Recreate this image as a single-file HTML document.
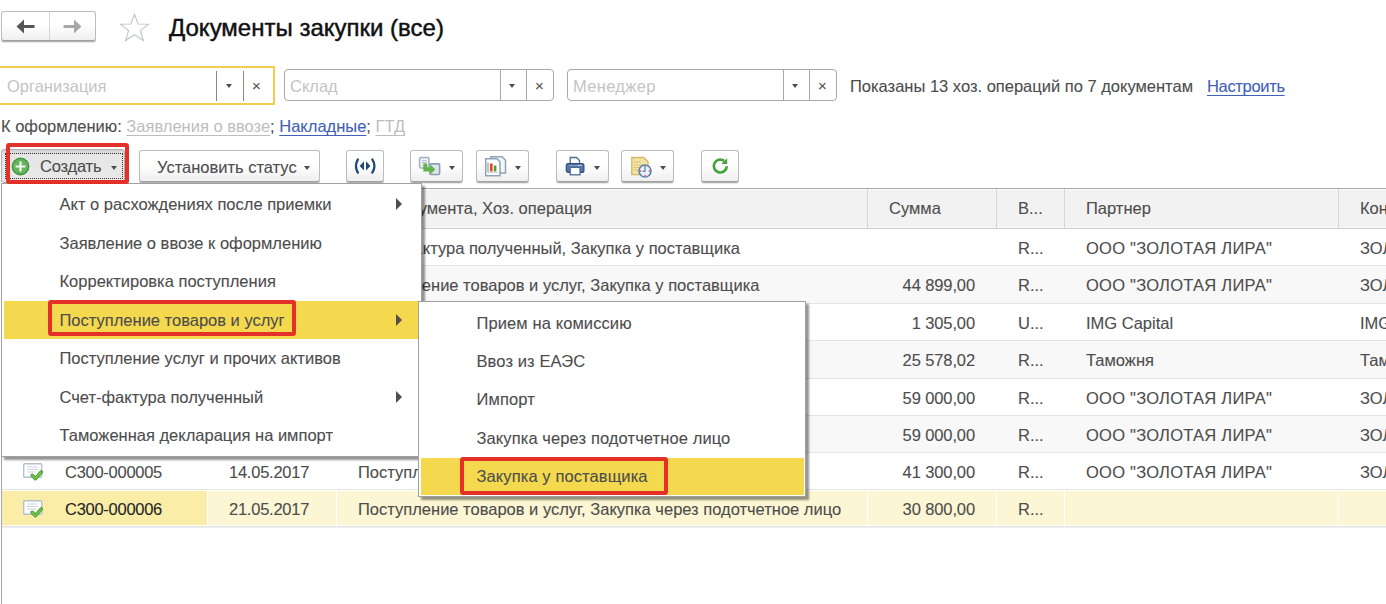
<!DOCTYPE html>
<html><head><meta charset="utf-8">
<style>
*{box-sizing:border-box;margin:0;padding:0}
html,body{width:1386px;height:604px;overflow:hidden;background:#fff}
body{position:relative;font-family:"Liberation Sans",sans-serif;font-size:16.5px;color:#4d4d4d;-webkit-text-stroke:0.1px currentColor}
.a{position:absolute}
.t{position:absolute;white-space:nowrap;line-height:20px;height:20px}
.btn{position:absolute;border:1px solid #bcbcbc;border-bottom-color:#a2a2a2;border-radius:3px;background:linear-gradient(#fff 0%,#fff 45%,#efefef 100%);box-shadow:0 1px 0 #b0b0b0,0 2px 1px rgba(0,0,0,.10)}
.dd{position:absolute;width:0;height:0;border-left:3.5px solid transparent;border-right:3.5px solid transparent;border-top:4px solid #4d4d4d}
.fld{position:absolute;border:1px solid #a8a8a8;border-radius:4px;background:#fff;height:32px;top:69px}
.sep{position:absolute;top:0;bottom:0;width:1px;background:#a8a8a8}
.ph{color:#c4c4c4;-webkit-text-stroke:0}
.x{position:absolute;font-size:15px;color:#505050;-webkit-text-stroke:0.1px #505050}
.hl{position:absolute;width:1px;background:#d6d6d6}
.rowl{position:absolute;left:2px;right:0;height:1px;background:#e4e4e4}
.menu{position:absolute;background:#fff;border:1px solid #a0a0a0;box-shadow:3px 3px 2px rgba(0,0,0,.42)}
.arr{position:absolute;width:0;height:0;border-top:6px solid transparent;border-bottom:6px solid transparent;border-left:6.5px solid #4d4d4d}
.u{text-decoration:underline;text-underline-offset:3px;text-decoration-thickness:1px}
.red{position:absolute;border:4px solid #e3312a;border-radius:3px}
</style></head><body>

<!-- nav buttons -->
<div class="btn" style="left:1px;top:11px;width:95px;height:30px"></div>
<div class="a" style="left:49px;top:12px;width:1px;height:28px;background:#d4d4d4"></div>
<svg class="a" style="left:16px;top:19px" width="20" height="15" viewBox="0 0 20 15"><path d="M0.5 7.5 L8 0.5 L8 6 L18.5 6 L18.5 9 L8 9 L8 14.5 Z" fill="#555"/></svg>
<svg class="a" style="left:62px;top:19px" width="20" height="15" viewBox="0 0 20 15"><path d="M19.5 7.5 L12 0.5 L12 6 L1.5 6 L1.5 9 L12 9 L12 14.5 Z" fill="#a8a8a8"/></svg>

<!-- star -->
<svg class="a" style="left:119px;top:13px" width="31" height="29" viewBox="0 0 31 29"><path d="M15.5 1.5 L19.2 11 L29.5 11.2 L21.4 17.6 L24.4 27.5 L15.5 21.8 L6.6 27.5 L9.6 17.6 L1.5 11.2 L11.8 11 Z" fill="none" stroke="#c3c7cc" stroke-width="1.2"/></svg>

<div class="t" style="left:169px;top:14px;font-size:24px;line-height:28px;height:28px;color:#111;-webkit-text-stroke:0.45px #111">Документы закупки (все)</div>

<!-- filters -->
<div class="a" style="left:-10px;top:66px;width:285px;height:39px;border:2px solid #f2cc4c"></div>
<div class="a" style="left:-10px;top:70px;width:281px;height:31px;background:#fff"></div>
<div class="a" style="left:216px;top:71px;width:1px;height:30px;background:#888"></div>
<div class="a" style="left:243px;top:71px;width:1px;height:30px;background:#888"></div>
<div class="t ph" style="left:7px;top:76px">Организация</div>
<div class="dd" style="left:226px;top:84px"></div>
<div class="t x" style="left:252px;top:76px">×</div>

<div class="fld" style="left:284px;width:270px">
  <div class="sep" style="left:215px"></div><div class="sep" style="left:241px"></div>
</div>
<div class="t ph" style="left:290px;top:76px">Склад</div>
<div class="dd" style="left:509px;top:84px"></div>
<div class="t x" style="left:535px;top:76px">×</div>

<div class="fld" style="left:567px;width:270px">
  <div class="sep" style="left:215px"></div><div class="sep" style="left:241px"></div>
</div>
<div class="t ph" style="left:573px;top:76px;letter-spacing:0.33px">Менеджер</div>
<div class="dd" style="left:792px;top:84px"></div>
<div class="t x" style="left:818px;top:76px">×</div>

<div class="t" style="left:850px;top:76px">Показаны 13 хоз. операций по 7 документам</div>
<div class="t u" style="left:1207px;top:76px;color:#4161b8;letter-spacing:-0.33px">Настроить</div>

<div class="t" style="left:1px;top:116px">К оформлению: <span class="u" style="color:#bdbdbd;-webkit-text-stroke:0">Заявления о ввозе</span>; <span class="u" style="color:#4161b8">Накладные</span>; <span class="u" style="color:#bdbdbd;-webkit-text-stroke:0">ГТД</span></div>

<!-- toolbar -->
<div class="a" style="left:1px;top:149px;width:124px;height:34px;border:1px solid #b0b0b0;border-radius:3px;background:linear-gradient(#d0d0d0,#e6e6e6 15%,#e9e9e9)"></div>
<div class="a" style="left:5px;top:153px;width:118px;height:26px;border:1px dotted #333"></div>
<svg class="a" style="left:10.5px;top:156.5px" width="19" height="19" viewBox="0 0 19 19"><circle cx="9.5" cy="9.5" r="8.9" fill="#3f9440"/><circle cx="9.5" cy="9.5" r="7.6" fill="#66b35e"/><path d="M9.5 4.6v9.8M4.6 9.5h9.8" stroke="#f4fbf2" stroke-width="2.2"/></svg>
<div class="t" style="left:40px;top:156px;letter-spacing:-0.2px">Создать</div>
<div class="dd" style="left:111px;top:166px"></div>

<div class="btn" style="left:139px;top:150px;width:181px;height:32px"></div>
<div class="t" style="left:157px;top:157px">Установить статус</div>
<div class="dd" style="left:304px;top:166px"></div>

<div class="btn" style="left:346px;top:150px;width:38px;height:32px"></div>
<svg class="a" style="left:354px;top:158px" width="22" height="16" viewBox="0 0 22 16"><path d="M3.85 1.4 Q0.05 8 3.85 14.6" fill="none" stroke="#1f4a78" stroke-width="2.3" stroke-linecap="round"/><path d="M18.3 1.4 Q22.6 8 18.3 14.6" fill="none" stroke="#1f4a78" stroke-width="2.3" stroke-linecap="round"/><path d="M10 3.2 L5.6 7.9 L10 12.6 Z M12 3.2 L16.4 7.9 L12 12.6 Z" fill="#1f4a78"/></svg>
<div class="btn" style="left:410px;top:150px;width:53px;height:32px"></div>
<svg class="a" style="left:418px;top:156px" width="23" height="20" viewBox="0 0 23 20"><rect x="1.6" y="1.6" width="9.4" height="10.4" rx="1.2" fill="#eef2f6" stroke="#a3b1c2" stroke-width="1.5"/><path d="M4 4.5h5M4 6.5h5" stroke="#b8c4d0" stroke-width="1"/><rect x="11.8" y="7.9" width="9.8" height="10.6" rx="1.2" fill="#dde6ef" stroke="#8d9db2" stroke-width="1.6"/><path d="M5.3 7.5 H9.3 V11.6 H12.3 V8.6 L17.4 13.4 L12.3 18.2 V15.4 H5.3 Z" fill="#5fb548"/></svg>
<div class="dd" style="left:449px;top:166px"></div>
<div class="btn" style="left:476px;top:150px;width:53px;height:32px"></div>
<svg class="a" style="left:484px;top:155px" width="23" height="23" viewBox="0 0 23 23"><path d="M6.8 1.8 H18 L21.5 5.3 V18 H6.8 Z" fill="#f4f7fa" stroke="#8fa2b8" stroke-width="1.5"/><path d="M12 6 h2.5 v8 h-2.5z" fill="#6db04f"/><path d="M1.7 3.8 H13 L16 6.8 V20.8 H1.7 Z" fill="#fff" stroke="#8fa2b8" stroke-width="1.5"/><path d="M4 7.5v9.5" stroke="#aaa" stroke-width="1.4"/><path d="M6 8.5h2.6v8H6z" fill="#e0442c"/><path d="M9.8 10.5h2.6v6H9.8z" fill="#4e9e34"/><path d="M3.5 17.5h11" stroke="#cdd6e0" stroke-width="1.2"/></svg>
<div class="dd" style="left:515px;top:166px"></div>
<div class="btn" style="left:556px;top:150px;width:53px;height:32px"></div>
<svg class="a" style="left:565px;top:156px" width="20" height="20" viewBox="0 0 20 20"><path d="M5.2 1.5 H11.5 L14.5 4.5 V8 H5.2 Z" fill="#fff" stroke="#4b6a92" stroke-width="1.3"/><rect x="1.3" y="7.6" width="17.6" height="8.8" rx="2" fill="#5277a6" stroke="#2f4f7a" stroke-width="1.2"/><path d="M4 9.6h12" stroke="#8aa6c8" stroke-width="1"/><rect x="5.2" y="11.4" width="9.8" height="7.4" fill="#fff" stroke="#4b6a92" stroke-width="1.3"/><path d="M13.3 9.3h1.2M15.6 9.3h1.2" stroke="#fff" stroke-width="1"/></svg>
<div class="dd" style="left:594px;top:166px"></div>
<div class="btn" style="left:621px;top:150px;width:53px;height:32px"></div>
<svg class="a" style="left:630px;top:156px" width="22" height="22" viewBox="0 0 22 22"><path d="M1.8 1.5 H13.8 L18 5.7 V18.6 H1.8 Z" fill="#f3e3a3" stroke="#d6b866" stroke-width="1.4"/><path d="M4 6h7M4 9h9M4 11.5h6M4 14h5" stroke="#d8c27e" stroke-width="1"/><circle cx="15" cy="15" r="6" fill="#e9f1fa" stroke="#5a80ad" stroke-width="1.6"/><path d="M15 11v4.2h-2.6" fill="none" stroke="#4a6fa0" stroke-width="1.1"/><path d="M15 10v1.3M15 18.7V20M9.9 15h1.3M18.7 15h1.3" stroke="#d0503a" stroke-width="1.3"/></svg>
<div class="dd" style="left:660px;top:166px"></div>
<div class="btn" style="left:701px;top:150px;width:38px;height:32px"></div>
<svg class="a" style="left:706px;top:152px" width="30" height="28" viewBox="706 152 30 28"><path d="M726.75 166.2 A6.45 6.45 0 1 1 724.2 160.9" fill="none" stroke="#47a33b" stroke-width="2.7"/><path d="M727.2 158.2 L727.2 163.9 L721.2 163.9 Z" fill="#47a33b"/></svg>

<!-- TABLE -->
<div class="a" style="left:1px;top:188px;width:1px;height:416px;background:#a8a8a8"></div>
<div class="a" style="left:1px;top:188px;width:1385px;height:1px;background:#a8a8a8"></div>
<div class="a" style="left:2px;top:189px;width:1384px;height:39px;background:#f2f2f2"></div>
<div class="a" style="left:2px;top:189px;width:1384px;height:1px;background:#fbfbfb"></div>
<div class="a" style="left:2px;top:227px;width:1384px;height:1px;background:#f7f7f7"></div>
<div class="a" style="left:2px;top:228px;width:1384px;height:1px;background:#cdcdcd"></div>
<div class="hl" style="left:207px;top:189px;height:39px"></div>
<div class="hl" style="left:336px;top:189px;height:39px"></div>
<div class="hl" style="left:867px;top:189px;height:39px"></div>
<div class="hl" style="left:996px;top:189px;height:39px"></div>
<div class="hl" style="left:1064px;top:189px;height:39px"></div>
<div class="hl" style="left:1338px;top:189px;height:39px"></div>
<div class="t" style="left:65px;top:197.9px">Номер</div>
<div class="t" style="left:229px;top:197.9px">Дата</div>
<div class="t" style="left:358px;top:197.9px">Вид документа, Хоз. операция</div>
<div class="t" style="left:889px;top:197.9px">Сумма</div>
<div class="t" style="left:1018px;top:197.9px">В...</div>
<div class="t" style="left:1086px;top:197.9px">Партнер</div>
<div class="t" style="left:1360px;top:197.9px">Контрагент</div>
<div class="rowl" style="top:265px"></div>
<div class="t" style="left:358px;top:237.6px;width:505px;overflow:hidden">Счет-фактура полученный, Закупка у поставщика</div>
<div class="t" style="left:1018px;top:237.6px">R...</div>
<div class="t" style="left:1086px;top:237.6px;letter-spacing:0.25px">ООО "ЗОЛОТАЯ ЛИРА"</div>
<div class="t" style="left:1360px;top:237.6px">ЗОЛОТАЯ</div>
<div class="a" style="left:2px;top:266px;width:1384px;height:37px;background:#f8f8f8"></div>
<div class="rowl" style="top:303px"></div>
<div class="t" style="left:358px;top:274.6px;width:505px;overflow:hidden">Поступление товаров и услуг, Закупка у поставщика</div>
<div class="t" style="left:860px;width:115px;text-align:right;letter-spacing:-0.11px;top:274.6px">44 899,00</div>
<div class="t" style="left:1018px;top:274.6px">R...</div>
<div class="t" style="left:1086px;top:274.6px;letter-spacing:0.25px">ООО "ЗОЛОТАЯ ЛИРА"</div>
<div class="t" style="left:1360px;top:274.6px">ЗОЛОТАЯ</div>
<div class="rowl" style="top:340px"></div>
<div class="t" style="left:358px;top:312.6px;width:505px;overflow:hidden">Поступление товаров и услуг, Прием на комиссию</div>
<div class="t" style="left:860px;width:115px;text-align:right;letter-spacing:-0.11px;top:312.6px">1 305,00</div>
<div class="t" style="left:1018px;top:312.6px">U...</div>
<div class="t" style="left:1086px;top:312.6px">IMG Capital</div>
<div class="t" style="left:1360px;top:312.6px">IMG Capital</div>
<div class="a" style="left:2px;top:341px;width:1384px;height:37px;background:#f8f8f8"></div>
<div class="rowl" style="top:378px"></div>
<div class="t" style="left:358px;top:349.6px;width:505px;overflow:hidden">Поступление товаров и услуг, Импорт</div>
<div class="t" style="left:860px;width:115px;text-align:right;letter-spacing:-0.11px;top:349.6px">25 578,02</div>
<div class="t" style="left:1018px;top:349.6px">R...</div>
<div class="t" style="left:1086px;top:349.6px">Таможня</div>
<div class="t" style="left:1360px;top:349.6px">Таможня</div>
<div class="rowl" style="top:415px"></div>
<div class="t" style="left:358px;top:387.6px;width:505px;overflow:hidden">Поступление товаров и услуг, Закупка у поставщика</div>
<div class="t" style="left:860px;width:115px;text-align:right;letter-spacing:-0.11px;top:387.6px">59 000,00</div>
<div class="t" style="left:1018px;top:387.6px">R...</div>
<div class="t" style="left:1086px;top:387.6px;letter-spacing:0.25px">ООО "ЗОЛОТАЯ ЛИРА"</div>
<div class="t" style="left:1360px;top:387.6px">ЗОЛОТАЯ</div>
<div class="a" style="left:2px;top:416px;width:1384px;height:36px;background:#f8f8f8"></div>
<div class="rowl" style="top:452px"></div>
<div class="t" style="left:358px;top:424.6px;width:505px;overflow:hidden">Поступление товаров и услуг, Закупка у поставщика</div>
<div class="t" style="left:860px;width:115px;text-align:right;letter-spacing:-0.11px;top:424.6px">59 000,00</div>
<div class="t" style="left:1018px;top:424.6px">R...</div>
<div class="t" style="left:1086px;top:424.6px;letter-spacing:0.25px">ООО "ЗОЛОТАЯ ЛИРА"</div>
<div class="t" style="left:1360px;top:424.6px">ЗОЛОТАЯ</div>
<div class="rowl" style="top:489px"></div>
<svg class="a" style="left:23px;top:463px" width="20" height="18" viewBox="0 0 20 18"><rect x="0.7" y="0.7" width="18" height="13.6" rx="1" fill="#fff" stroke="#b3c0ce" stroke-width="1.4"/><path d="M4 4h11M4 6.5h11M4 9h9" stroke="#cdd5de" stroke-width="1"/><path d="M9.2 12.3 L12.3 15.6 L18.3 9" fill="none" stroke="#4c9a32" stroke-width="3.6" stroke-linejoin="round" stroke-linecap="round"/><path d="M9.2 12.3 L12.3 15.6 L18.3 9" fill="none" stroke="#6fc24c" stroke-width="2" stroke-linejoin="round" stroke-linecap="round"/></svg>
<div class="t" style="left:65px;letter-spacing:-0.27px;top:461.6px">С300-000005</div>
<div class="t" style="left:229px;letter-spacing:-0.24px;top:461.6px">14.05.2017</div>
<div class="t" style="left:358px;top:461.6px;width:505px;overflow:hidden">Поступление товаров и услуг, Закупка у поставщика</div>
<div class="t" style="left:860px;width:115px;text-align:right;letter-spacing:-0.11px;top:461.6px">41 300,00</div>
<div class="t" style="left:1018px;top:461.6px">R...</div>
<div class="t" style="left:1086px;top:461.6px;letter-spacing:0.25px">ООО "ЗОЛОТАЯ ЛИРА"</div>
<div class="t" style="left:1360px;top:461.6px">ЗОЛОТАЯ</div>
<div class="a" style="left:2px;top:491px;width:1384px;height:34px;background:#fcf6d4"></div>
<div class="a" style="left:2px;top:491px;width:205px;height:34px;background:#f9eda8"></div>
<div class="a" style="left:207px;top:491px;width:1px;height:34px;background:#fff"></div>
<div class="a" style="left:336px;top:491px;width:1px;height:34px;background:#fff"></div>
<div class="a" style="left:867px;top:491px;width:1px;height:34px;background:#fff"></div>
<div class="a" style="left:996px;top:491px;width:1px;height:34px;background:#fff"></div>
<div class="a" style="left:1064px;top:491px;width:1px;height:34px;background:#fff"></div>
<div class="a" style="left:1338px;top:491px;width:1px;height:34px;background:#fff"></div>
<div class="a" style="left:2px;top:527px;width:1384px;height:1px;background:#eeeeee"></div>
<div class="rowl" style="top:526px"></div>
<svg class="a" style="left:23px;top:500px" width="20" height="18" viewBox="0 0 20 18"><rect x="0.7" y="0.7" width="18" height="13.6" rx="1" fill="#fff" stroke="#b3c0ce" stroke-width="1.4"/><path d="M4 4h11M4 6.5h11M4 9h9" stroke="#cdd5de" stroke-width="1"/><path d="M9.2 12.3 L12.3 15.6 L18.3 9" fill="none" stroke="#4c9a32" stroke-width="3.6" stroke-linejoin="round" stroke-linecap="round"/><path d="M9.2 12.3 L12.3 15.6 L18.3 9" fill="none" stroke="#6fc24c" stroke-width="2" stroke-linejoin="round" stroke-linecap="round"/></svg>
<div class="t" style="left:65px;letter-spacing:-0.27px;top:498.6px;color:#262626">С300-000006</div>
<div class="t" style="left:229px;letter-spacing:-0.24px;top:498.6px">21.05.2017</div>
<div class="t" style="left:358px;top:498.6px;width:505px;overflow:hidden">Поступление товаров и услуг, Закупка через подотчетное лицо</div>
<div class="t" style="left:860px;width:115px;text-align:right;letter-spacing:-0.11px;top:498.6px">30 800,00</div>
<div class="t" style="left:1018px;top:498.6px">R...</div>
<!-- MENUS -->
<div class="menu" style="left:1px;top:183px;width:421px;height:274px"></div>
<div class="t" style="left:59.5px;top:193.9px">Акт о расхождениях после приемки</div>
<div class="arr" style="left:396px;top:198.4px"></div>
<div class="t" style="left:59.5px;top:232.5px">Заявление о ввозе к оформлению</div>
<div class="t" style="left:59.5px;top:271.1px">Корректировка поступления</div>
<div class="a" style="left:4px;top:301px;width:415px;height:38px;background:#f4d94f"></div>
<div class="t" style="left:59.5px;top:309.6px">Поступление товаров и услуг</div>
<div class="arr" style="left:396px;top:314.1px"></div>
<div class="t" style="left:59.5px;top:348.2px">Поступление услуг и прочих активов</div>
<div class="t" style="left:59.5px;top:386.8px">Счет-фактура полученный</div>
<div class="arr" style="left:396px;top:391.3px"></div>
<div class="t" style="left:59.5px;top:425.4px">Таможенная декларация на импорт</div>
<div class="menu" style="left:418px;top:301px;width:388px;height:196px"></div>
<div class="t" style="left:476.5px;top:312.5px;letter-spacing:0.1px">Прием на комиссию</div>
<div class="t" style="left:476.5px;top:350.9px;letter-spacing:0.1px">Ввоз из ЕАЭС</div>
<div class="t" style="left:476.5px;top:389.2px;letter-spacing:0.1px">Импорт</div>
<div class="t" style="left:476.5px;top:427.6px;letter-spacing:0.1px">Закупка через подотчетное лицо</div>
<div class="a" style="left:421px;top:458px;width:383px;height:37px;background:#f4d94f"></div>
<div class="t" style="left:476.5px;top:466.0px;letter-spacing:0.1px">Закупка у поставщика</div>
<div class="red" style="left:6px;top:143px;width:123px;height:41px"></div>
<div class="red" style="left:47.5px;top:300px;width:248px;height:36px"></div>
<div class="red" style="left:460px;top:457px;width:208px;height:38px"></div>
</body></html>
